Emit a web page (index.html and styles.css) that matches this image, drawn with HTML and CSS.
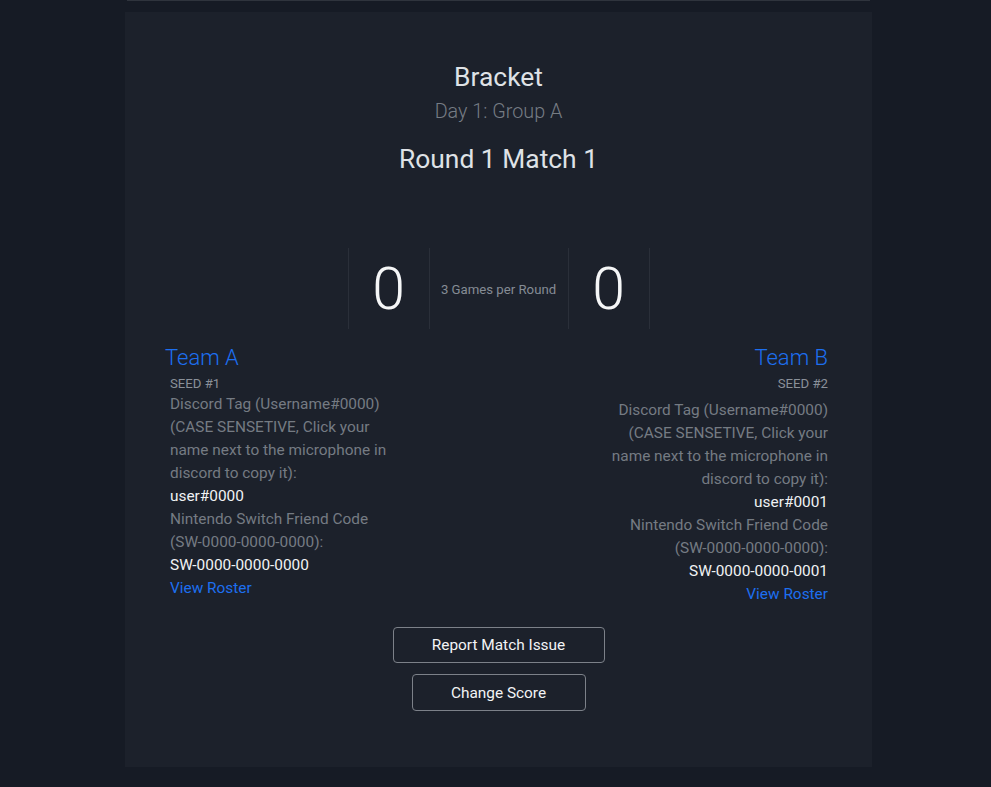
FILE: index.html
```html
<!DOCTYPE html>
<html lang="en">
<head>
<meta charset="utf-8">
<title>Bracket</title>
<link rel="stylesheet" href="styles.css">
</head>
<body>
<div class="topbar"></div>
<main class="card">
  <h1 class="title">Bracket</h1>
  <div class="subtitle">Day 1: Group A</div>
  <h2 class="match">Round 1 Match 1</h2>

  <div class="scoreboard">
    <div class="score">0</div>
    <div class="games">3 Games per Round</div>
    <div class="score">0</div>
  </div>

  <div class="teams">
    <section class="team team-a">
      <div class="team-name">Team A</div>
      <div class="team-info">
        <div class="seed">SEED #1</div>
        <div class="label">Discord Tag (Username#0000) (CASE SENSETIVE, Click your name next to the microphone in discord to copy it):</div>
        <div class="value">user#0000</div>
        <div class="label">Nintendo Switch Friend Code (SW-0000-0000-0000):</div>
        <div class="value">SW-0000-0000-0000</div>
        <a class="roster" href="#">View Roster</a>
      </div>
    </section>
    <section class="team team-b">
      <div class="team-name">Team B</div>
      <div class="team-info">
        <div class="seed seed-b">SEED #2</div>
        <div class="label">Discord Tag (Username#0000) (CASE SENSETIVE, Click your name next to the microphone in discord to copy it):</div>
        <div class="value">user#0001</div>
        <div class="label">Nintendo Switch Friend Code (SW-0000-0000-0000):</div>
        <div class="value">SW-0000-0000-0001</div>
        <a class="roster" href="#">View Roster</a>
      </div>
    </section>
  </div>

  <div class="actions">
    <button class="btn btn-report">Report Match Issue</button>
    <button class="btn btn-score">Change Score</button>
  </div>
</main>
</body>
</html>
```

FILE: styles.css
```css
html, body {
  margin: 0;
  padding: 0;
}
body {
  background: #161b25;
  font-family: Roboto, "Liberation Sans", Arial, sans-serif;
  color: #dee2e6;
  height: 787px;
  overflow: hidden;
}
.topbar {
  height: 1px;
  background: #2f343d;
  margin: 0 121px 0 127px;
}
.card {
  box-sizing: border-box;
  width: 747px;
  height: 755px;
  margin: 11px 0 0 125px;
  background: #1c212b;
  padding: 49px 44px 0 40px;
  display: flex;
  flex-direction: column;
  align-items: center;
}
.title {
  margin: 0;
  font-size: 26.4px;
  line-height: 32px;
  font-weight: 400;
  color: #dfe2e6;
  padding-left: 4px;
}
.subtitle {
  margin-top: 7px;
  font-size: 19.8px;
  line-height: 24px;
  font-weight: 300;
  color: #767c84;
  padding-left: 4px;
}
.match {
  margin: 19px 0 0;
  font-size: 26.4px;
  line-height: 32px;
  font-weight: 400;
  color: #dfe2e6;
  padding-left: 4px;
}
.scoreboard {
  margin-top: 73px;
  display: flex;
  height: 81px;
  padding-left: 4px;
}
.score {
  box-sizing: border-box;
  width: 82px;
  border-left: 1px solid #2a2f39;
  border-right: 1px solid #2a2f39;
  display: flex;
  align-items: center;
  justify-content: center;
  font-size: 59px;
  font-weight: 300;
  color: #f5f6f7;
}
.games {
  width: 138px;
  display: flex;
  align-items: center;
  justify-content: center;
  font-size: 13.2px;
  color: #858c95;
  padding-top: 2px;
}
.teams {
  align-self: stretch;
  margin-top: 16px;
  display: flex;
  justify-content: space-between;
  align-items: flex-start;
}
.team {
  display: flex;
  flex-direction: column;
}
.team-b {
  align-items: flex-end;
  text-align: right;
}
.team-name {
  font-size: 22px;
  line-height: 26px;
  font-weight: 300;
  color: #1d6ff0;
}
.team-info {
  width: 220px;
  display: flex;
  flex-direction: column;
  font-size: 15.4px;
  line-height: 23px;
}
.team-a .team-info {
  margin-left: 5px;
}
.team-b .team-info {
  align-items: flex-end;
}
.seed {
  margin-top: 4px;
  font-size: 13.2px;
  line-height: 18px;
  color: #8a9099;
  text-transform: uppercase;
}
.seed-b {
  margin-bottom: 6px;
}
.label {
  color: #757b83;
}
.value {
  color: #f0f2f4;
  font-weight: 400;
}
.roster {
  color: #1d6ff0;
  text-decoration: none;
}
.actions {
  margin-top: 21px;
  display: flex;
  flex-direction: column;
  align-items: center;
  gap: 11px;
  padding-left: 4px;
}
.btn {
  background: transparent;
  border: 1px solid #7c8189;
  border-radius: 4px;
  color: #f3f4f6;
  font-family: Roboto, "Liberation Sans", Arial, sans-serif;
  font-size: 15.4px;
  font-weight: 400;
  line-height: 20px;
  cursor: pointer;
}
.btn-report {
  width: 212px;
  height: 36px;
}
.btn-score {
  width: 174px;
  height: 37px;
}
```
